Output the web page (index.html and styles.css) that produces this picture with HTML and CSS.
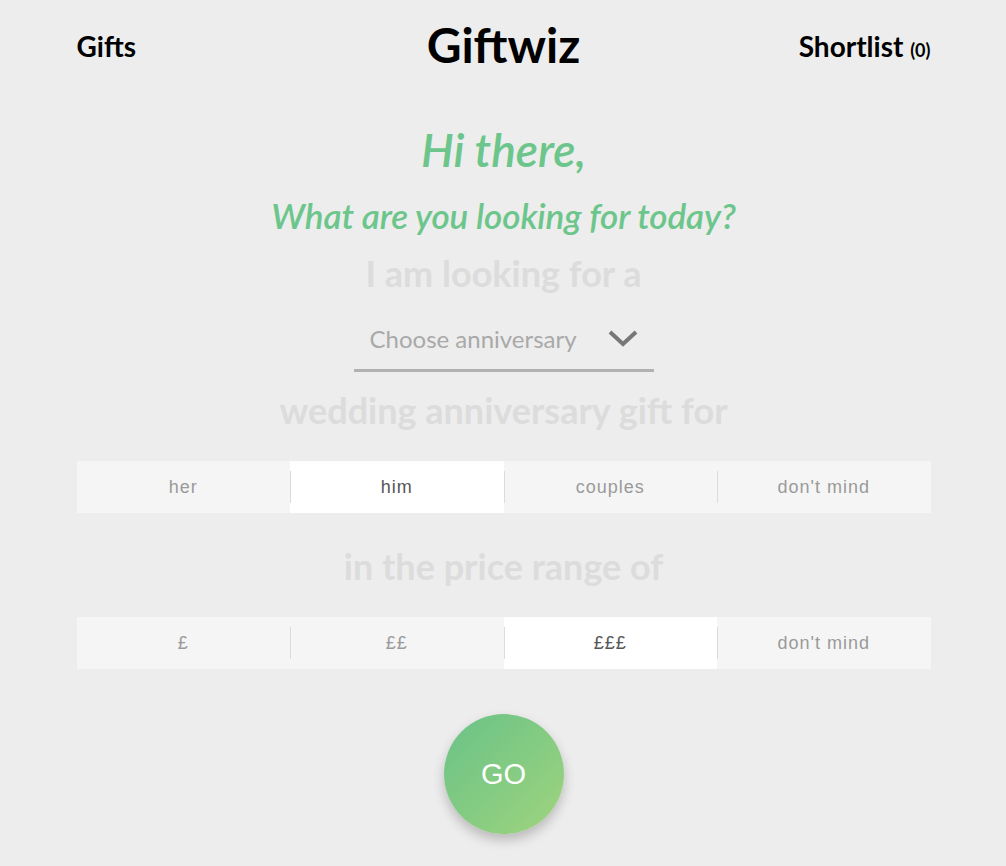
FILE: index.html
```html
<!DOCTYPE html>
<html>
<head>
<meta charset="utf-8">
<link rel="stylesheet" href="styles.css">
</head>
<body>
<div class="page">
  <header class="header">
    <a class="nav-left">Gifts</a>
    <div class="logo">Giftwiz</div>
    <a class="nav-right">Shortlist <span class="count">(0)</span></a>
  </header>
  <main class="main">
    <h1 class="hello">Hi there,</h1>
    <h2 class="question">What are you looking for today?</h2>
    <p class="phrase p1">I am looking for a</p>
    <div class="select">
      <span class="select-text">Choose anniversary</span>
      <svg class="chev" width="30" height="20" viewBox="0 0 30 20"><path d="M2 3 L15 15 L28 3" fill="none" stroke="#777" stroke-width="4"/></svg>
    </div>
    <p class="phrase p2">wedding anniversary gift for</p>
    <div class="seg">
      <div class="opt">her</div>
      <div class="opt active">him</div>
      <div class="opt">couples</div>
      <div class="opt">don't mind</div>
    </div>
    <p class="phrase p3">in the price range of</p>
    <div class="seg">
      <div class="opt">£</div>
      <div class="opt">££</div>
      <div class="opt active">£££</div>
      <div class="opt">don't mind</div>
    </div>
    <button class="go">GO</button>
  </main>
</div>
</body>
</html>
```
FILE: styles.css
```css
html, body { margin: 0; padding: 0; }
body {
  background: #ededed;
  font-family: Lato, "Liberation Sans", sans-serif;
  width: 1006px;
  height: 866px;
  overflow: hidden;
}
.page { width: 854px; margin: 0 auto; padding-left: 1px; }
.header {
  display: grid;
  grid-template-columns: 1fr auto 1fr;
  align-items: center;
  height: 92px;
}
.nav-left, .nav-right { font-weight: 700; font-size: 28px; color: #000; }
.nav-left { justify-self: start; }
.nav-right { justify-self: end; }
.nav-right .count { font-size: 18px; }
.logo { font-weight: 700; font-size: 48px; color: #000; margin-top: -4px; }
.main { display: flex; flex-direction: column; align-items: center; }
.hello {
  margin: 28px 0 0;
  font-style: italic; font-weight: 600;
  font-size: 46px; color: #6cc68b; line-height: 60px;
}
.question {
  margin: 5px 0 0;
  font-style: italic; font-weight: 600;
  font-size: 35px; color: #6cc68b; line-height: 60px;
  letter-spacing: -0.1px;
}
.phrase {
  margin: 0;
  font-weight: 700; font-size: 36px; color: #dcdcdc; line-height: 60px;
}
.p1 { margin-top: -2px; }
.select {
  width: 300px;
  height: 62px;
  margin-top: 7px;
  box-sizing: border-box;
  border-bottom: 3px solid #b1b1b1;
  display: flex; align-items: center; justify-content: space-between;
  padding: 0 16px 2px 16px;
}
.select-text { font-size: 24px; color: #a9a9a9; }
.p2 { margin-top: 8px; }
.seg {
  width: 854px;
  height: 52px;
  display: flex;
  background: #f5f5f5;
  margin-top: 21px;
}
.opt {
  flex: 1;
  display: flex; align-items: center; justify-content: center;
  font-family: "Liberation Sans", Arial, sans-serif;
  font-size: 18px; color: #9a9a9a;
  letter-spacing: 1px;
  position: relative;
}
.opt + .opt::before {
  content: "";
  position: absolute;
  left: 0; top: 10px; bottom: 10px;
  width: 1px;
  background: #dcdcdc;
}
.opt.active { background: #fff; color: #555; }
.p3 { margin-top: 23px; }
.go {
  margin-top: 45px;
  width: 120px; height: 120px;
  border-radius: 50%;
  border: none;
  background: linear-gradient(135deg, #69c287 0%, #86cc82 55%, #a0d47e 100%);
  color: #fff;
  font-family: "Liberation Sans", Arial, sans-serif;
  font-size: 29px;
  box-shadow: 0 6px 12px rgba(0,0,0,0.22);
}
```
